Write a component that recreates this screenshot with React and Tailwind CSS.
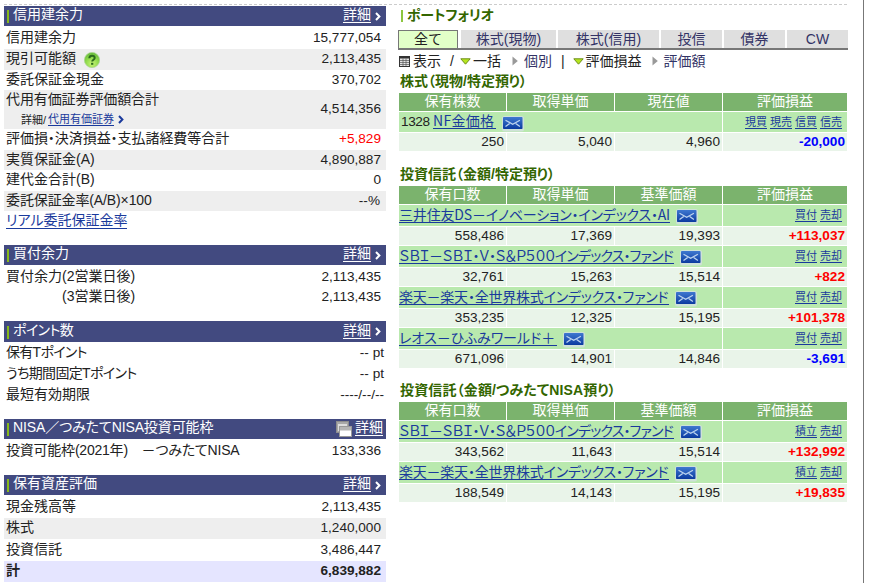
import clsx from "clsx"

const ja = "font-['Liberation_Sans','Noto_Sans_CJK_JP',sans-serif]"
const gothic = "font-['Noto_Sans_CJK_JP',sans-serif]"

function Num({ children, className }) {
  return <span className={clsx("text-[13.6px] whitespace-nowrap", className)}>{children}</span>
}

function Chevron({ className }) {
  return (
    <svg viewBox="0 0 6 9" className={clsx("w-[6px] h-[9px] shrink-0", className)} fill="none" stroke="currentColor" strokeWidth="2">
      <path d="M1 1l3.4 3.5L1 8" />
    </svg>
  )
}

function HelpIcon() {
  return (
    <svg viewBox="0 0 16 16" className="w-4 h-4 shrink-0">
      <defs>
        <radialGradient id="help" cx="50%" cy="75%" r="70%">
          <stop offset="0" stopColor="#c8f576" />
          <stop offset="0.6" stopColor="#8ed94a" />
          <stop offset="1" stopColor="#69bd3c" />
        </radialGradient>
      </defs>
      <circle cx="8" cy="8" r="7.6" fill="url(#help)" stroke="#a9d68e" strokeWidth="0.8" />
      <path d="M5.3 6.2C5.4 4.5 6.5 3.7 8 3.7s2.7.9 2.7 2.2c0 1.8-2.5 1.8-2.5 3.7" fill="none" stroke="#2c6b1d" strokeWidth="2" />
      <rect x="7.1" y="10.8" width="2.2" height="2" fill="#2c6b1d" />
    </svg>
  )
}

function WindowsIcon() {
  return (
    <svg viewBox="0 0 16 16" className="w-4 h-4 shrink-0">
      <rect x="0.5" y="0.5" width="12" height="11" fill="#a8a8a8" stroke="#8d8d8d" />
      <rect x="2" y="3" width="9" height="7" fill="#ddd" />
      <rect x="3.5" y="5.5" width="12" height="10" fill="#fff" stroke="#999" />
      <rect x="4" y="6" width="11" height="3.5" fill="#b5b5b5" />
    </svg>
  )
}

function MailIcon({ className }) {
  return (
    <svg viewBox="0 0 22 16" className={clsx("w-[22px] h-4 shrink-0", className)}>
      <defs>
        <linearGradient id="mail" x1="0" y1="0" x2="0" y2="1">
          <stop offset="0" stopColor="#3f78d0" />
          <stop offset="1" stopColor="#0b3aa0" />
        </linearGradient>
      </defs>
      <rect x="0" y="0" width="22" height="15.5" rx="2.5" fill="#cfe2d8" />
      <rect x="1" y="1" width="19.5" height="12" rx="0.8" fill="url(#mail)" />
      <path d="M3.5 4.2l7.2 4 7.2-4M3.5 10.6l4.2-3.2M17.9 10.6l-4.2-3.2" fill="none" stroke="#bcd3ef" strokeWidth="1.3" />
    </svg>
  )
}

function TableIcon() {
  return (
    <svg viewBox="0 0 11 11" className="w-[11px] h-[11px] shrink-0">
      <rect width="11" height="11" fill="#333" />
      <rect x="1" y="2.5" width="9" height="7.5" fill="#e4e4e4" />
      <path d="M1 4.5h9M1 6.5h9M1 8.5h9" stroke="#555" strokeWidth="0.7" />
      <path d="M4 2.5v7.5M7 2.5v7.5" stroke="#555" strokeWidth="0.7" />
    </svg>
  )
}

function DownMark() {
  return (
    <svg viewBox="0 0 11 7" className="w-[11px] h-[7px] shrink-0">
      <path d="M0.8 0.8h9.4L5.5 6.2z" fill="#b5e61d" stroke="#6f8f1c" />
    </svg>
  )
}

function RightMark() {
  return (
    <svg viewBox="0 0 6 10" className="w-[6px] h-[10px] shrink-0">
      <path d="M0.5 0.5v9L5.8 5z" fill="#999" />
    </svg>
  )
}

function SectionHead({ title, icon, className }) {
  return (
    <div className={clsx("flex items-center bg-[#424a80] text-white pl-[3px]", className)}>
      <span className="w-[2px] h-[13px] mt-px bg-[#86b81b]" />
      <span className="pl-[4px] pb-[3px] text-[14px] whitespace-nowrap">{title}</span>
      <span className={clsx("ml-auto flex items-center", icon ? "pr-[3px]" : "pr-[5px]")}>
        {icon && <WindowsIcon />}
        <span className="ml-[3px] mb-[2px] leading-[15px] text-[14px] tracking-normal border-b border-white">詳細</span>
        {!icon && <Chevron className="ml-1" />}
      </span>
    </div>
  )
}

function Row({ label, value, className, labelClass, valueClass = "pr-[5px]" }) {
  return (
    <div className={clsx("flex items-center justify-between pl-[2px]", className)}>
      <span className={clsx("flex items-center whitespace-nowrap text-[14px] pb-[2px]", labelClass)}>{label}</span>
      <Num className={valueClass}>{value}</Num>
    </div>
  )
}

function MarginPanel() {
  return (
    <div className="w-[382px] shrink-0 pt-px text-[#222]">
      <SectionHead title="信用建余力" className="h-[20px]" />
      <div className="pt-[2px]">
        <Row label="信用建余力" value="15,777,054" className="h-[21px]" />
        <Row
          label={<>現引可能額<span className="pl-[8px] pt-[3px]"><HelpIcon /></span></>}
          value="2,113,435"
          className="h-[21px] bg-[#eee]"
        />
        <Row label="委託保証金現金" value="370,702" className="h-[20px]" />
        <div className="h-[39px] bg-[#eee] flex items-center justify-between pl-[2px]">
          <div>
            <div className="h-[20px] leading-[19px] text-[14px] tracking-[-0.1px]">代用有価証券評価額合計</div>
            <div className="h-[19px] flex items-center pl-[15px] text-[11px] leading-[12px]">
              詳細/
              <a className="ml-[2px] text-[#1a3a9c] border-b border-[#1a3a9c]">代用有価証券</a>
              <Chevron className="ml-[4px] text-[#1a3a9c]" />
            </div>
          </div>
          <Num className="pr-[5px]">4,514,356</Num>
        </div>
        <Row
          label="評価損・決済損益・支払諸経費等合計"
          value="+5,829"
          className="h-[21px]"
          labelClass="[font-feature-settings:'palt'] tracking-[-0.05px]"
          valueClass="pr-[5px] text-[#f00]"
        />
        <Row label="実質保証金(A)" value="4,890,887" className="h-[20px] bg-[#eee]" />
        <Row label="建代金合計(B)" value="0" className="h-[21px]" />
        <Row label="委託保証金率(A/B)×100" value="--%" className="h-[20px] bg-[#eee]" labelClass="tracking-[-0.12px]" valueClass="pr-[6px]" />
        <div className="h-[20px] pl-[2px] flex items-center">
          <a className="text-[14px] leading-[15px] text-[#1a3a9c] border-b border-[#1a3a9c] [font-feature-settings:'palt']">リアル委託保証金率</a>
        </div>
      </div>

      <SectionHead title="買付余力" className="h-[20px] mt-[14px]" />
      <div className="pt-[2px]">
        <Row label="買付余力(2営業日後)" value="2,113,435" className="h-[20px]" />
        <Row label="(3営業日後)" value="2,113,435" className="h-[21px]" labelClass="pl-[56px]" />
      </div>

      <SectionHead title="ポイント数" className="h-[21px] mt-[13px] tracking-[-0.6px] [font-feature-settings:'palt']" />
      <div className="pt-px">
        <Row label="保有Tポイント" value="-- pt" className="h-[21px]" labelClass="tracking-[-0.7px] [font-feature-settings:'palt']" valueClass="pr-[2px]" />
        <Row label="うち期間固定Tポイント" value="-- pt" className="h-[21px]" labelClass="tracking-[-0.65px] [font-feature-settings:'palt']" valueClass="pr-[2px]" />
        <Row label="最短有効期限" value="----/--/--" className="h-[20px]" valueClass="pr-[2px]" />
      </div>

      <SectionHead title="NISA／つみたてNISA投資可能枠" icon className="h-[20px] mt-[14px] tracking-[-0.12px] [font-feature-settings:'palt']" />
      <div className="pt-[2px]">
        <Row label="投資可能枠(2021年)　－つみたてNISA" value="133,336" className="h-[20px]" labelClass="tracking-[-0.22px] [font-feature-settings:'palt']" />
      </div>

      <SectionHead title="保有資産評価" className="h-[20px] mt-[14px]" />
      <div className="pt-[2px]">
        <Row label="現金残高等" value="2,113,435" className="h-[21px]" />
        <Row label="株式" value="1,240,000" className="h-[21px] bg-[#eee]" />
        <Row label="投資信託" value="3,486,447" className="h-[22px]" />
        <Row label="計" value="6,839,882" className="h-[21px] bg-[#e5e5ff] font-bold" />
      </div>
    </div>
  )
}

function Tab({ children, className }) {
  return (
    <div className={clsx("h-[18px] flex items-center justify-center bg-[#dfdfdf] text-[14px] text-[#336] whitespace-nowrap", className)}>
      {children}
    </div>
  )
}

function HoldingTable({ title, heads, rows, titleClass, first }) {
  return (
    <section>
      <h3 className={clsx("text-[14px] font-bold text-[#360] pl-px whitespace-nowrap [font-feature-settings:'palt']", titleClass)}>{title}</h3>
      <div className="grid grid-cols-[107px_107px_107px_124px] gap-px w-[448px]">
        {heads.map((h) => (
          <div key={h} className="h-[18px] leading-[16px] bg-[#7bb36d] text-white text-[14px] text-center">{h}</div>
        ))}
        {rows.map((r) => (
          <div key={r.name} className="contents">
            <div className={clsx("col-span-3 flex items-center bg-[#b9e9ae]", first ? "h-[20px]" : "h-[21px]")}>
              {r.code && <Num className="pl-[2px] w-[34px] tracking-[-0.4px] text-[#222]">{r.code}</Num>}
              <a
                className={clsx(
                  "text-[14px] leading-[15px] mb-[2px] text-[#1a3a9c] border-b border-[#1a3a9c] whitespace-nowrap [font-feature-settings:'palt']",
                  gothic,
                  r.nameClass
                )}
              >
                {r.name}
              </a>
              <MailIcon className="ml-[6px] mt-[3px]" />
            </div>
            <div className={clsx("flex items-center justify-end gap-[3px] pr-[5px] bg-[#b9e9ae]", first ? "h-[20px]" : "h-[21px]")}>
              {r.actions.map((a) => (
                <a key={a} className="text-[11px] leading-[12px] text-[#1a3a9c] border-b border-[#1a3a9c]">{a}</a>
              ))}
            </div>
            {r.values.map((v, i) => (
              <div key={i} className="flex items-center justify-end pr-[2px] h-[18px] bg-[#e9f4e9] text-[#222]">
                <Num>{v}</Num>
              </div>
            ))}
            <div className={clsx("flex items-center justify-end pr-[2px] h-[18px] bg-[#e9f4e9] font-bold", r.gain.startsWith("+") ? "text-[#f00]" : "text-[#00f]")}>
              <Num>{r.gain}</Num>
            </div>
          </div>
        ))}
      </div>
    </section>
  )
}

const stockRows = [
  { code: "1328", name: "NF金価格", nameClass: "w-[63px] tracking-[0.3px]", actions: ["現買", "現売", "信買", "信売"], values: ["250", "5,040", "4,960"], gain: "-20,000" },
]

const fundRows = [
  { name: "三井住友DS－イノベーション・インデックス・AI", nameClass: "w-[271px] tracking-[-0.17px]", actions: ["買付", "売却"], values: ["558,486", "17,369", "19,393"], gain: "+113,037" },
  { name: "ＳＢＩ－ＳＢＩ・Ｖ・Ｓ＆Ｐ５００インデックス・ファンド", nameClass: "w-[275px] tracking-[-0.82px]", actions: ["買付", "売却"], values: ["32,761", "15,263", "15,514"], gain: "+822" },
  { name: "楽天－楽天・全世界株式インデックス・ファンド", nameClass: "w-[270px] tracking-[-0.22px]", actions: ["買付", "売却"], values: ["353,235", "12,325", "15,195"], gain: "+101,378" },
  { name: "レオス－ひふみワールド＋", nameClass: "w-[158px]", actions: ["買付", "売却"], values: ["671,096", "14,901", "14,846"], gain: "-3,691" },
]

const nisaRows = [
  { ...fundRows[1], actions: ["積立", "売却"], values: ["343,562", "11,643", "15,514"], gain: "+132,992" },
  { ...fundRows[2], actions: ["積立", "売却"], values: ["188,549", "14,143", "15,195"], gain: "+19,835" },
]

function Portfolio() {
  return (
    <div className="w-[450px] shrink-0">
      <div className="flex items-center h-[20px] pl-[3px] text-[14px] font-bold text-[#360]">
        <span className="w-[2px] h-[12px] mt-[2px] bg-[#8dc63f]" />
        <span className="pl-1 tracking-[-0.2px] [font-feature-settings:'palt']">ポートフォリオ</span>
      </div>
      <div className="mt-[5px] flex border-b-2 border-[#777] h-[20px]">
        <div className="w-[60px] h-[18px] mr-[3px] flex items-center justify-center bg-[#e2ffc8] border border-b-0 border-[#777] text-[14px] text-[#222]">全て</div>
        <Tab className="w-[95px] mr-[2px]">株式(現物)</Tab>
        <Tab className="w-[101px] mr-[2px]">株式(信用)</Tab>
        <Tab className="w-[61px] mr-[2px]">投信</Tab>
        <Tab className="w-[61px] mr-[2px]">債券</Tab>
        <Tab className="w-[61px]">CW</Tab>
      </div>
      <div className="h-[22px] flex items-center pl-[1px] text-[14px] text-[#222] whitespace-nowrap">
        <TableIcon />
        <span className="pl-[3px]">表示</span>
        <span className="pl-[9px] pr-[6px]">/</span>
        <DownMark />
        <span className="pl-[2px] pr-[11px]">一括</span>
        <RightMark />
        <span className="pl-[6px] text-[#336]">個別</span>
        <span className="pl-[9px] pr-[8px]">|</span>
        <DownMark />
        <span className="pl-[2px] pr-[10px]">評価損益</span>
        <RightMark />
        <span className="pl-[6px] text-[#336]">評価額</span>
      </div>
      <div className="pl-px">
        <HoldingTable first title="株式（現物/特定預り）" heads={["保有株数", "取得単価", "現在値", "評価損益"]} rows={stockRows} titleClass="h-[21px] leading-[18px]" />
        <HoldingTable title="投資信託（金額/特定預り）" heads={["保有口数", "取得単価", "基準価額", "評価損益"]} rows={fundRows} titleClass="pt-[13px] h-[35px] leading-[20px]" />
        <HoldingTable title="投資信託（金額/つみたてNISA預り）" heads={["保有口数", "取得単価", "基準価額", "評価損益"]} rows={nisaRows} titleClass="pt-[12px] h-[34px] leading-[20px] tracking-[0.15px]" />
      </div>
    </div>
  )
}

export default function App() {
  return (
    <div className={clsx("w-[871px] h-[583px] overflow-hidden bg-white", ja)}>
      <div className="w-[864px] h-full pl-1 pt-1 border-r border-[#777]">
        <div className="w-[843px] border-t border-dashed border-[#ccc]" />
        <div className="flex gap-[12px]">
          <MarginPanel />
          <Portfolio />
        </div>
      </div>
    </div>
  )
}
